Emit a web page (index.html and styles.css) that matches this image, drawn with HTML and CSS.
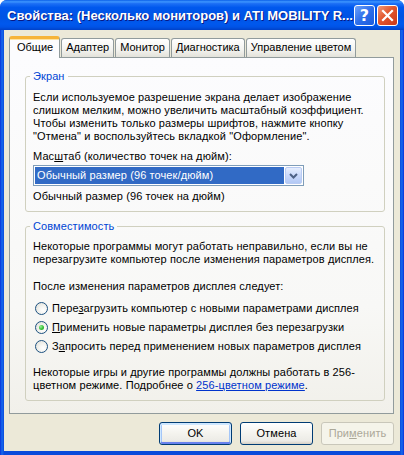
FILE: index.html
```html
<!DOCTYPE html>
<html lang="ru">
<head>
<meta charset="utf-8">
<title>Свойства</title>
<link rel="stylesheet" href="styles.css">
</head>
<body>
<div class="window">
  <div class="titlebar">
    <span class="title">Свойства: (Несколько мониторов) и ATI MOBILITY R...</span>
    <div class="tbuttons">
      <span class="tbtn help">?</span>
      <span class="tbtn close"><svg width="13" height="13" viewBox="0 0 13 13"><path d="M2 2 L11 11 M11 2 L2 11" stroke="#fff" stroke-width="2.2" stroke-linecap="square"/></svg></span>
    </div>
  </div>
  <div class="frame">
    <div class="client">
      <div class="tabs">
        <span class="tab active">Общие</span>
        <span class="tab">Адаптер</span>
        <span class="tab">Монитор</span>
        <span class="tab">Диагностика</span>
        <span class="tab">Управление цветом</span>
      </div>
      <div class="panel">
        <fieldset class="group screen">
          <legend>Экран</legend>
          <p class="para">Если используемое разрешение экрана делает изображение<br>слишком мелким, можно увеличить масштабный коэффициент.<br>Чтобы изменить только размеры шрифтов, нажмите кнопку<br>"Отмена" и воспользуйтесь вкладкой "Оформление".</p>
          <div class="label">Мас<u>ш</u>таб (количество точек на дюйм):</div>
          <div class="combo">
            <span class="combo-value">Обычный размер (96 точек/дюйм)</span>
            <span class="combo-btn"><svg width="9" height="6" viewBox="0 0 9 6"><path d="M1 1 L4.5 4.5 L8 1" fill="none" stroke="#4D6185" stroke-width="2"/></svg></span>
          </div>
          <div class="note">Обычный размер (96 точек на дюйм)</div>
        </fieldset>
        <fieldset class="group compat">
          <legend>Совместимость</legend>
          <p class="para">Некоторые программы могут работать неправильно, если вы не<br>перезагрузите компьютер после изменения параметров дисплея.</p>
          <div class="label after">После изменения параметров дисплея следует:</div>
          <div class="radios">
            <div class="radio"><span class="circle"></span><span>Пере<u>з</u>агрузить компьютер с новыми параметрами дисплея</span></div>
            <div class="radio"><span class="circle checked"></span><span><u>П</u>рименить новые параметры дисплея без перезагрузки</span></div>
            <div class="radio"><span class="circle"></span><span>З<u>а</u>просить перед применением новых параметров дисплея</span></div>
          </div>
          <p class="para last">Некоторые игры и другие программы должны работать в 256-<br>цветном режиме. Подробнее о <a class="link" href="#">256-цветном режиме</a>.</p>
        </fieldset>
      </div>
      <div class="buttons">
        <span class="btn default">OK</span>
        <span class="btn">Отмена</span>
        <span class="btn disabled">При<u>м</u>енить</span>
      </div>
    </div>
  </div>
</div>
</body>
</html>
```
FILE: styles.css
```css
* { box-sizing: border-box; }
html, body { margin: 0; padding: 0; background: #ffffff; }
body {
  font-family: "Liberation Sans", Arial, sans-serif;
  font-size: 11px;
  line-height: 13px;
  letter-spacing: 0.1px;
  color: #000;
}
.window {
  width: 404px;
  height: 455px;
  display: flex;
  flex-direction: column;
  border-radius: 7px 7px 0 0;
  overflow: hidden;
  background: #0A4ADB;
}
.titlebar {
  height: 30px;
  flex: none;
  display: flex;
  align-items: center;
  justify-content: space-between;
  padding: 0 6px 0 7px;
  background: linear-gradient(to bottom, #0A5FE8 0%, #3D95FF 6%, #1C6FF5 12%, #0058EE 25%, #0054E3 55%, #0058EE 80%, #0053E6 90%, #0041C8 100%);
}
.title {
  color: #fff;
  font-weight: bold;
  font-size: 13px;
  letter-spacing: 0;
  text-shadow: 1px 1px 0 #0A1883;
  white-space: nowrap;
}
.tbuttons { display: flex; gap: 2px; }
.tbtn {
  width: 21px;
  height: 21px;
  border: 1px solid #fff;
  border-radius: 3px;
  display: flex;
  align-items: center;
  justify-content: center;
  color: #fff;
}
.help {
  background: linear-gradient(135deg, #6FA2FA 0%, #2E6FEA 50%, #1B5BDD 100%);
  font-weight: bold;
  font-size: 16px;
  font-family: "DejaVu Sans", sans-serif;
}
.close {
  background: linear-gradient(135deg, #F19A7A 0%, #E2562D 45%, #C9371A 100%);
}
.frame {
  flex: 1;
  display: flex;
  padding: 0 4px 4px;
  background: linear-gradient(to right, #0831D9 0, #166AEE 2px, #0A4ADB 4px, #0A4ADB 400px, #166AEE 402px, #0831D9 404px);
}
.client {
  flex: 1;
  background: #ECE9D8;
  padding: 6px 6px 0 5px;
  display: flex;
  flex-direction: column;
}
.tabs {
  height: 21px;
  display: flex;
  align-items: flex-end;
  gap: 1px;
  position: relative;
  z-index: 1;
}
.tab {
  height: 19px;
  padding: 0 4px;
  border: 1px solid #919B9C;
  border-bottom: none;
  border-radius: 3px 3px 0 0;
  background: linear-gradient(to bottom, #FFFFFF 0%, #F3F3EF 60%, #E3E2DA 100%);
  line-height: 17px;
  white-space: nowrap;
  letter-spacing: 0;
}
.tab.active {
  height: 22px;
  margin-bottom: -1px;
  padding: 0 6px 0 7px;
  background: #FCFCFE;
  border-top: 3px solid #F6B43A;
  box-shadow: inset 0 1px 0 #FFE3A0;
  line-height: 17px;
}
.panel {
  height: 357px;
  flex: none;
  border: 1px solid #919B9C;
  background: linear-gradient(to bottom, #FCFCFE 0%, #F8F8F6 70%, #F1F0EA 100%);
  padding: 12px 8px 0 15px;
  display: flex;
  flex-direction: column;
}
.group {
  margin: 0;
  padding: 8px 7px 8px 7px;
  border: 1px solid #D0D0BF;
  border-radius: 3px;
  min-width: 0;
}
.group legend {
  margin-left: -3px;
  padding: 0 3px;
  color: #0046D5;
  line-height: 13px;
}
.compat { margin-top: 8px; padding-top: 7px; }
.para { margin: 0; }
.label { margin-top: 7px; }
.label.after { margin-top: 14px; }
.combo {
  margin-top: 2px;
  width: 271px;
  height: 21px;
  border: 1px solid #7F9DB9;
  background: #fff;
  padding: 1px;
  display: flex;
  gap: 1px;
}
.combo-value {
  flex: 1;
  background: #316AC5;
  color: #fff;
  padding-left: 2px;
  line-height: 17px;
}
.combo-btn {
  width: 17px;
  border: 1px solid #B9CBF3;
  border-radius: 2px;
  background: linear-gradient(to bottom, #E6EEFD 0%, #C9D8FB 50%, #B3C9F5 100%);
  display: flex;
  align-items: center;
  justify-content: center;
}
.note { margin-top: 4px; }
.radios {
  margin-top: 9px;
  display: flex;
  flex-direction: column;
  gap: 6px;
}
.radio {
  display: flex;
  align-items: center;
  gap: 4px;
  height: 13px;
  margin-left: 2px;
}
.circle {
  width: 13px;
  height: 13px;
  flex: none;
  border-radius: 50%;
  border: 1px solid #1C5180;
  background: radial-gradient(circle at 65% 65%, #FFFFFF 0%, #F4F4F0 40%, #DCDCD4 100%);
  display: flex;
  align-items: center;
  justify-content: center;
}
.circle.checked::after {
  content: "";
  width: 5px;
  height: 5px;
  border-radius: 50%;
  background: radial-gradient(circle at 35% 35%, #9BEF9B 0%, #3BC43B 50%, #1E9A1E 100%);
}
.para.last { margin-top: 13px; }
.link { color: #0033CC; text-decoration: underline; }
.buttons {
  margin-top: 8px;
  display: flex;
  justify-content: flex-end;
  gap: 8px;
}
.btn {
  width: 73px;
  height: 23px;
  border: 1px solid #003C74;
  border-radius: 3px;
  background: linear-gradient(to bottom, #FFFFFF 0%, #F4F3EE 50%, #ECEBE6 85%, #D6D0C5 100%);
  display: flex;
  align-items: center;
  justify-content: center;
}
.btn.default {
  box-shadow: inset 0 1px 0 1px #CEE7FF, inset 0 -1px 0 1px #6982EE, inset 1px 0 0 1px #A4C6F8, inset -1px 0 0 1px #A4C6F8;
}
.btn.disabled {
  border-color: #C9C7BA;
  background: #F5F4EA;
  color: #ACA899;
}
```
